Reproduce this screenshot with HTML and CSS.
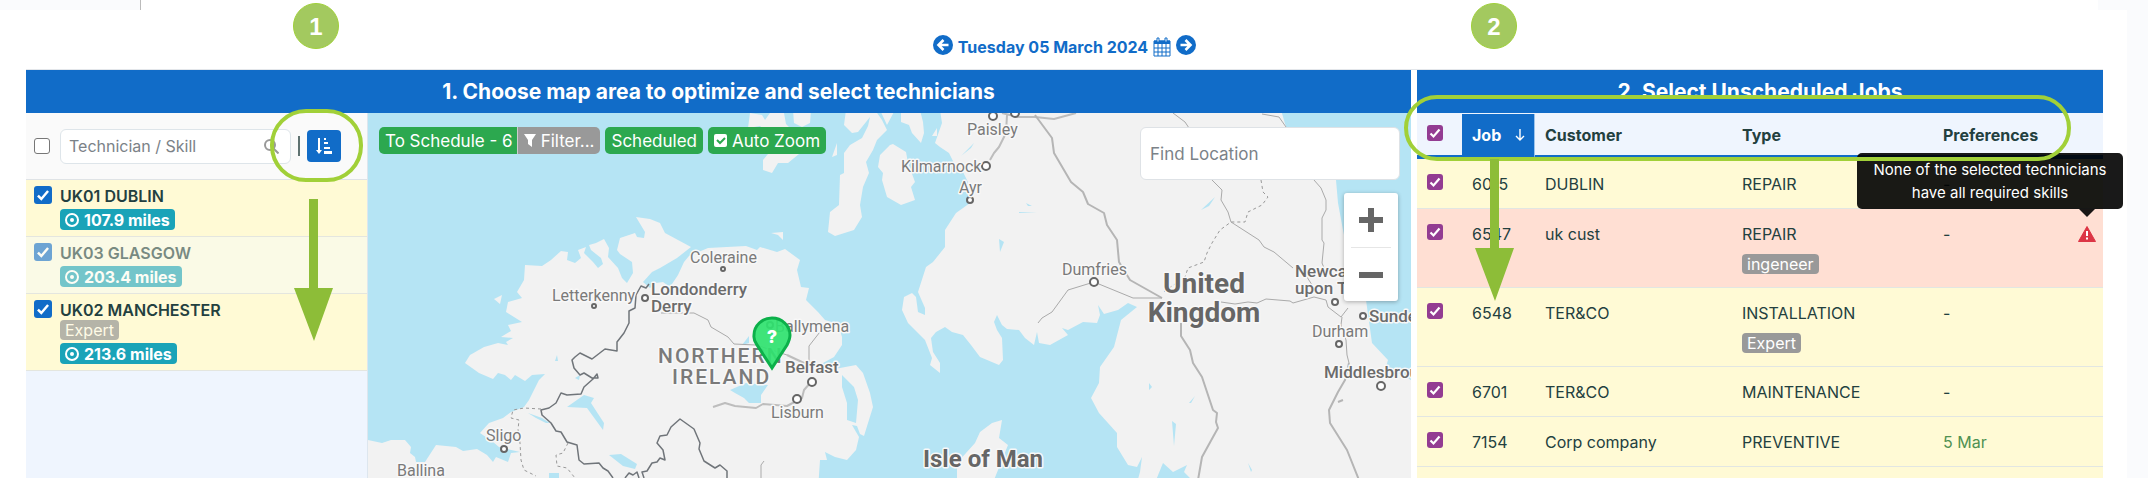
FILE: index.html
```
<!DOCTYPE html>
<html lang="en">
<head>
	<meta charset="utf-8">
	<title>Schedule optimizer</title>
	<link rel="stylesheet" href="styles.css">
</head>
<body>
	<div class="page">
		<div class="top-tab"></div>
		<div class="top-tab right"></div>
		<header class="date-bar">
			<button type="button" class="icon-btn" aria-label="Previous day">
				<svg width="20" height="20" viewBox="0 0 20 20"><circle cx="10" cy="10" r="10" fill="#116cc8"/><path d="M15.5 10H6M10.5 5L5.5 10l5 5" fill="none" stroke="#fff" stroke-width="2.6"/></svg>
			</button>
			<a href="#" class="date">Tuesday 05 March 2024</a>
			<button type="button" class="icon-btn cal" aria-label="Calendar">
				<svg width="18" height="20" viewBox="0 0 18 20"><path d="M1 4h16v15H1z" fill="#fff" stroke="#116cc8"/><path d="M1 3.5h16V7H1z" fill="#116cc8"/><path d="M5 7v12M9 7v12M13 7v12M1 11h16M1 15h16" stroke="#116cc8"/><path d="M4 1h2v4H4zM12 1h2v4h-2z" fill="#fff" stroke="#116cc8"/></svg>
			</button>
			<button type="button" class="icon-btn" aria-label="Next day">
				<svg width="20" height="20" viewBox="0 0 20 20"><circle cx="10" cy="10" r="10" fill="#116cc8"/><path d="M4.5 10H14M9.5 5l5 5-5 5" fill="none" stroke="#fff" stroke-width="2.6"/></svg>
			</button>
		</header>

		<main class="panels">
			<section class="panel">
				<h2>1. Choose map area to optimize and select technicians</h2>
				<div class="panel-body">
					<aside class="techs">
						<div class="tech-search">
							<input type="checkbox" class="box plain" aria-label="Select all technicians">
							<div class="search-field">
								<input type="text" placeholder="Technician / Skill" aria-label="Technician / Skill">
								<svg width="15" height="15" viewBox="0 0 15 15" fill="none" stroke="#999" stroke-width="2"><circle cx="6" cy="6" r="5"/><path d="M9.5 9.5l5 5"/></svg>
							</div>
							<span class="sep"></span>
							<button type="button" class="sort" aria-label="Sort">
								<svg width="16" height="18" viewBox="0 0 16 18" fill="#fff"><path d="M2 1h2v12h2l-3 4-3-4h2z"/><path d="M8 1h2v2H8zM8 5h4v2H8zM8 10h6v2H8zM8 14h8v3H8z"/></svg>
							</button>
						</div>
						<ul class="tech-list">
							<li>
								<input type="checkbox" class="box blue" id="t1" checked>
								<div>
									<label for="t1">UK01 DUBLIN</label>
									<span class="miles"><svg viewBox="0 0 14 14"><circle cx="7" cy="7" r="6"/><circle class="dot" cx="7" cy="7" r="2"/></svg>107.9 miles</span>
								</div>
							</li>
							<li class="dim">
								<input type="checkbox" class="box blue" id="t2" checked>
								<div>
									<label for="t2">UK03 GLASGOW</label>
									<span class="miles"><svg viewBox="0 0 14 14"><circle cx="7" cy="7" r="6"/><circle class="dot" cx="7" cy="7" r="2"/></svg>203.4 miles</span>
								</div>
							</li>
							<li>
								<input type="checkbox" class="box blue" id="t3" checked>
								<div>
									<label for="t3">UK02 MANCHESTER</label>
									<span class="skill light">Expert</span>
									<span class="miles"><svg viewBox="0 0 14 14"><circle cx="7" cy="7" r="6"/><circle class="dot" cx="7" cy="7" r="2"/></svg>213.6 miles</span>
								</div>
							</li>
						</ul>
					</aside>

					<div class="map">
						<svg class="map-canvas" viewBox="368 113 1043 365" preserveAspectRatio="xMidYMid slice">
							<!-- land -->
							<g fill="#f2f2f2">
								<path d="M360 440L368 440 382 443 391 440 405 440 411 447 410 453 415 457 416 462 425 462 436 445 456 447 463 451 477 449 487 455 493 462 496 457 508 462 511 453 520 452 499 447 493 442 480 433 489 423 503 418 511 412 524 407 529 400 539 380 545 374 532 375 525 381 515 375 511 380 505 375 498 373 493 379 479 373 465 363 470 355 484 347 498 343 508 345 506 342 513 338 501 337 511 331 508 325 522 322 506 312 508 302 522 298 517 292 524 280 525 265 542 266 551 260 561 251 568 252 567 260 575 263 581 258 578 250 586 247 584 253 593 262 598 268 603 264 601 258 591 250 589 245 596 243 604 239 609 248 608 257 618 268 622 278 627 283 633 273 632 262 620 254 617 250 620 238 635 233 637 237 644 238 645 232 636 217 650 219 660 223 665 233 678 240 691 247 677 258 660 268 652 272 643 282 650 288 656 283 663 282 670 287 678 275 684 262 689 256 708 248 746 246 757 250 760 247 777 252 785 249 800 260 797 270 801 287 809 288 806 300 818 312 825 320 838 324 842 337 842 345 834 357 823 363 820 373 840 368 856 365 863 373 870 393 873 407 868 423 864 436 860 434 857 426 852 425 859 437 856 450 847 460 835 457 825 452 827 460 820 460 818 490 360 490z"/>
								<path d="M494 299L502 295 500 304zM771 233L783 232 783 240 778 235z"/>
								<path d="M748 128L750 113 762 115 765 120 770 113 784 113 786 124 792 130 795 150 799 154 788 163 778 163 772 173 763 170 763 160 768 154 770 135 760 126zM793 110h18l-1 13-8 4-8-4zM832 157l5-14v12z"/>
								<path d="M844 125L846 110 875 110 882 120 887 130 877 140 873 150 866 162 869 173 863 187 860 205 862 217 854 230 835 236 828 232 830 212 839 205 840 175 844 173 844 153 850 145 862 138 868 126 870 117 858 132 852 133z"/>
								<path d="M880 155L890 145 893 144 906 152 908 163 915 182 911 187 915 200 901 205 887 197 882 180 883 173 878 167zM880 110h15l-8 15zM901 110h19l3 12 1 11-3 10-9-10-3-8-8-3zM937 128l-5 8 5 0z"/>
								<path d="M940 110L942 123 935 143 940 147 949 153 954 163 962 170 968 182 968 197 970 203 956 213 945 230 945 247 933 262 926 267 918 292 925 308 925 315 918 312 916 297 912 293 904 297 902 310 908 323 925 340 932 358 930 365 940 373 940 363 933 352 931 338 936 332 945 327 952 332 963 335 971 345 980 357 999 365 1003 360 1002 338 997 330 994 322 997 315 1002 325 1007 329 1019 330 1025 338 1034 345 1037 332 1039 343 1050 345 1068 335 1062 328 1068 330 1083 322 1097 323 1100 315 1098 305 1104 314 1118 310 1128 303 1137 307 1121 320 1114 347 1100 367 1099 383 1091 398 1099 413 1117 433 1117 447 1128 465 1137 467 1142 457 1140 472 1135 490 1152 490 1163 463 1173 472 1187 465 1184 472 1192 480 1411 490 1411 380 1386 367 1388 360 1372 343 1366 300 1345 240 1343 230 1338 203 1336 180 1325 165 1295 140 1286 127 1281 110z"/>
								<path d="M1002 420L999 438 1008 445 990 490 957 490 957 463 975 443 980 432 992 423z"/>
							</g>
							<!-- lakes -->
							<g fill="#b5e4f4">
								<path d="M730 390L746 383 768 385 761 395 761 403 749 403 744 398 735 393zM567 407L584 395 594 398 591 403 604 423 603 430 587 408zM842 375L854 387 858 400 856 423 847 420 847 403 842 387zM528 413l14 5 8 5-4 0-10-5zM609 455l12-1 16 10-2 5-12-3zM742 345l7-9 0 7zM555 361l2-6 1 6zM575 378l5-3-1 5zM549 473h10v5h-10zM961 156l13-13-3 5zM1019 212l18 1-18 0zM1026 203l6 3-4 0zM999 239l5 3-4 10zM1172 421l4 3-2 22zM1189 403l6-7-4 7zM1144 381l1 14zM1149 383l3 4-3 3zM1201 210l14-13-6 9zM1032 287l8 9zM1248 463l4 7-1 2zM1294 468l14-11z"/>
							</g>
							<!-- roads -->
							<g fill="none" stroke="#bdbdbd" stroke-width="2" stroke-linejoin="round">
								<path d="M1002 113L1018 117 1035 117 1054 119 1076 113M1007 115L1006 133 999 147 994 153 990 160" />
								<path d="M1035 115L1052 138 1054 153 1071 182 1083 192 1088 204 1104 213 1107 225 1117 240 1119 262 1130 280 1162 298M1181 323L1181 336 1190 350 1193 363 1202 377 1213 410 1217 413 1216 422 1218 428 1213 437 1202 457 1198 480M1349 363L1345 380 1338 392 1329 410 1330 423 1347 450 1359 480M1338 402l5-2" stroke="#b5b5b5"/>
								<path d="M713 407L725 403 735 406 756 408 763 404 787 406 802 398 804 390 811 382M787 355L804 363"/>
								<path stroke-width="1" stroke="#aaa" d="M661 313L694 313 708 320 711 327 728 337 734 344 756 345 787 355M804 363L809 362 809 346 823 328M761 480V465l3-4M1038 323L1042 318 1052 312 1068 290 1094 282 1133 298 1162 298M1221 302L1235 304 1248 302 1257 303 1266 299 1290 301 1293 303 1314 297 1326 300 1328 307 1341 317 1348 308M1342 317L1341 325 1346 340 1347 355 1349 363M1173 113L1185 122 1189 128M1212 180L1222 190 1221 200 1228 212 1231 222 1259 240 1264 247 1274 252 1293 268M1314 180L1321 188 1326 200 1326 210 1322 218 1322 240 1324 243 1322 263 1327 275M1262 114L1279 117 1286 127M1305 274l9 14"/>
							</g>
							<!-- borders -->
							<g fill="none" stroke="#70757a" stroke-linejoin="round">
								<path d="M649 284L646 288 641 286 636 295 635 308 629 311 629 323 624 333 617 342 617 351 605 349 592 359 580 353 575 357 572 360 574 368 580 375 584 373 592 378 598 378 597 374 593 379 584 387 581 394 567 395 561 393 556 403 549 408 541 410 542 415 551 423 556 431 561 432 567 442 577 445 579 460 584 464 599 463 603 468 608 471 613 478M625 478l4-5 4 2 4-3 2 6M644 478l-2-6 5-1 5-8 5-1 3-4 5 2-2-10-6-7 3-7 7-1 4-8 9-8 14 10 6 14-1 6 5 12 11 7 5-3 7 6v8" stroke-width="1.5"/>
								<path stroke="#999" stroke-dasharray="3 3" d="M541 409L524 408 513 410 511 418 519 420 518 430 520 443 521 460 524 470 536 476M568 443L563 453 556 455 557 466 567 468 575 478M1261 180L1263 192 1268 197 1262 205 1248 212 1245 222 1231 222 1220 230 1212 243 1207 253 1204 262 1188 268 1185 277 1162 293"/>
							</g>
							<!-- towns -->
							<g class="town">
								<circle cx="723" cy="269" r="2"/><circle cx="594" cy="306" r="2"/><circle cx="645" cy="298" r="3"/><circle cx="770" cy="325" r="3"/><circle cx="812" cy="382" r="4"/><circle cx="797" cy="399" r="4"/><circle cx="504" cy="449" r="3"/><circle cx="993" cy="116" r="4"/><circle cx="1015" cy="113" r="4"/><circle cx="986" cy="166" r="4"/><circle cx="970" cy="200" r="3"/><circle cx="1094" cy="282" r="4"/><circle cx="1335" cy="302" r="3"/><circle cx="1363" cy="316" r="3"/><circle cx="1339" cy="344" r="3"/><circle cx="1381" cy="386" r="4"/>
							</g>
							<g class="names">
								<text x="690" y="263">Coleraine</text>
								<text x="552" y="301">Letterkenny</text>
								<text x="775" y="332">Ballymena</text>
								<text x="771" y="418">Lisburn</text>
								<text x="486" y="441">Sligo</text>
								<text x="397" y="476">Ballina</text>
								<text x="967" y="135">Paisley</text>
								<text x="901" y="172">Kilmarnock</text>
								<text x="959" y="193">Ayr</text>
								<text x="1062" y="275">Dumfries</text>
								<text x="1312" y="337">Durham</text>
								<g class="city">
									<text x="651" y="295">Londonderry</text>
									<text x="651" y="312">Derry</text>
									<text x="785" y="373">Belfast</text>
									<text x="1295" y="277">Newcastle</text>
									<text x="1295" y="294">upon Tyne</text>
									<text x="1369" y="322">Sunderland</text>
									<text x="1324" y="378">Middlesbrough</text>
								</g>
								<g class="region">
									<text x="658" y="363">NORTHERN</text>
									<text x="672" y="384">IRELAND</text>
								</g>
								<g class="country">
									<text x="1204" y="293">United</text>
									<text x="1204" y="322">Kingdom</text>
								</g>
								<text class="isle" x="923" y="467">Isle of Man</text>
							</g>
							<path d="M772 368L757 345C753 340 754 337 754 335a18 17 0 0 1 36 0c0 3-1 6-3 10z" fill="#2fe36f" fill-opacity=".92" stroke="#0cb04a" stroke-width="3"/>
							<text class="pin-mark" x="772" y="343">?</text>
						</svg>

						<div class="map-tools">
							<div class="group">
								<button type="button">To Schedule - 6</button><button type="button" class="grey"><svg width="12" height="13" viewBox="0 0 12 13"><path d="M0 0h12L8 6v7L4 10V6z" fill="#fff"/></svg>Filter...</button>
							</div>
							<button type="button">Scheduled</button>
							<button type="button"><svg width="13" height="13" viewBox="0 0 13 13"><rect width="13" height="13" rx="2" fill="#fff"/><path d="M3 6l3 3 5-5" fill="none" stroke="#2ca84f" stroke-width="2"/></svg>Auto Zoom</button>
						</div>
						<input type="text" class="find" placeholder="Find Location" aria-label="Find Location">
						<div class="zoom">
							<button type="button" aria-label="Zoom in"><svg width="24" height="24" viewBox="0 0 24 24"><path d="M12 0v24M0 12h24" stroke="#666" stroke-width="6"/></svg></button>
							<button type="button" aria-label="Zoom out"><svg width="24" height="24" viewBox="0 0 24 24"><path d="M0 12h24" stroke="#666" stroke-width="6"/></svg></button>
						</div>
					</div>
				</div>
				<div class="note-circle one">1</div>
				<div class="note-ring one"></div>
				<svg class="note-arrow one" width="39" height="142" viewBox="0 0 39 142"><path d="M15 0h9v89h15l-19 53L0 89h15z" fill="#8dbd38"/></svg>
			</section>

			<section class="panel">
				<h2>2. Select Unscheduled Jobs</h2>
				<table class="jobs">
					<colgroup><col class="c-check"><col class="c-job"><col class="c-cust"><col class="c-type"><col class="c-pref"><col class="c-warn"></colgroup>
					<thead>
						<tr>
							<th><input type="checkbox" class="box purple" aria-label="Select all jobs" checked></th>
							<th class="sorted"><span>Job</span><svg width="10" height="12" viewBox="0 0 10 12" fill="none" stroke="#fff"><path d="M5 0v11M1 7l4 4 4-4" stroke-width="1.4"/></svg></th>
							<th>Customer</th>
							<th>Type</th>
							<th>Preferences</th>
							<th></th>
						</tr>
					</thead>
					<tbody>
						<tr>
							<td><input type="checkbox" class="box purple" aria-label="6015" checked></td>
							<td>6015</td><td>DUBLIN</td><td>REPAIR</td><td>-</td><td></td>
						</tr>
						<tr class="bad">
							<td><input type="checkbox" class="box purple" aria-label="6547" checked></td>
							<td>6547</td><td>uk cust</td><td>REPAIR<span class="skill">ingeneer</span></td><td>-</td>
							<td class="warn">
								<svg width="18" height="16" viewBox="0 0 18 16"><path d="M9 0.5L17.5 15.5H.5z" fill="#dc3545" stroke="#dc3545" stroke-linejoin="round"/><path d="M8 5h2v5H8zM8 11.500h2v2H8z" fill="#fff"/></svg>
								<div class="tooltip" role="tooltip">None of the selected technicians have all required skills</div>
							</td>
						</tr>
						<tr>
							<td><input type="checkbox" class="box purple" aria-label="6548" checked></td>
							<td>6548</td><td>TER&amp;CO</td><td>INSTALLATION<span class="skill">Expert</span></td><td>-</td><td></td>
						</tr>
						<tr>
							<td><input type="checkbox" class="box purple" aria-label="6701" checked></td>
							<td>6701</td><td>TER&amp;CO</td><td>MAINTENANCE</td><td>-</td><td></td>
						</tr>
						<tr>
							<td><input type="checkbox" class="box purple" aria-label="7154" checked></td>
							<td>7154</td><td>Corp company</td><td>PREVENTIVE</td><td class="day">5 Mar</td><td></td>
						</tr>
					</tbody>
				</table>
				<div class="jobs-rest"></div>
				<div class="note-circle two">2</div>
				<div class="note-ring two"></div>
				<svg class="note-arrow two" width="39" height="142" viewBox="0 0 39 142"><path d="M15 0h9v89h15l-19 53L0 89h15z" fill="#8dbd38"/></svg>
			</section>
		</main>
	</div>
	<div class="gutter"></div>
</body>
</html>
```
FILE: styles.css
```
*{
	box-sizing: border-box;
	margin: 0;
	padding: 0;
}
body{
	display: flex;
	height: 100vh;
	overflow: hidden;
	background: #fff;
	color: #23403f;
	font: 16px/24px Inter, "Liberation Sans", sans-serif;
}
button, input{
	font: inherit;
	color: inherit;
}
button{
	border: 0;
	cursor: pointer;
}
.page{
	flex: 1;
	min-width: 0;
	display: flex;
	flex-direction: column;
	position: relative;
	padding: 0 24px 0 26px;
}
.gutter{
	width: 21px;
	background: #fafbfd;
}
.top-tab{
	position: absolute;
	left: 0;
	top: 0;
	width: 141px;
	height: 10px;
	background: #fafbfd;
	border-right: 1px solid #bbb;
}
.top-tab.right{
	left: auto;
	right: 0;
	width: 29px;
	border: 0;
}

/* date */
.date-bar{
	display: flex;
	justify-content: center;
	gap: 5px;
	height: 70px;
	padding-top: 35px;
	border-bottom: 1px solid #e3e6ea;
}
.date{
	color: #116cc8;
	font-weight: 700;
	text-decoration: none;
}
.icon-btn{
	height: 20px;
	background: none;
}
.icon-btn svg{
	display: block;
}
.icon-btn.cal{
	margin-top: 2px;
}

/* panels */
.panels{
	flex: 1;
	min-height: 0;
	display: grid;
	grid-template-columns: 1385fr 686fr;
	grid-template-rows: minmax(0, 1fr);
	gap: 6px;
}
.panel{
	position: relative;
	min-width: 0;
	display: flex;
	flex-direction: column;
	background: #eff5fe;
}
h2{
	flex: none;
	height: 43px;
	background: #116cc8;
	color: #fff;
	font-size: 21px;
	line-height: 43px;
	text-align: center;
}
.panel-body{
	flex: 1;
	min-height: 0;
	display: flex;
}

/* check boxes */
.box{
	appearance: none;
	flex: none;
	display: block;
	width: 16px;
	height: 16px;
	border-radius: 3px;
	background: center / 100% url("data:image/svg+xml,%3Csvg xmlns='http://www.w3.org/2000/svg' viewBox='0 0 16 16'%3E%3Cpath d='M3.500 8.500l3 3 6-7' fill='none' stroke='%23fff' stroke-width='2.200'/%3E%3C/svg%3E") no-repeat;
}
.box.plain{
	background: #fff;
	border: 1px solid #777;
}
.box.blue{
	width: 18px;
	height: 18px;
	background-color: #116cc8;
}
.box.purple{
	background-color: #933c92;
}

/* technicians */
.techs{
	width: 342px;
	border-right: 1px solid #dde6ee;
}
.tech-search{
	display: flex;
	align-items: center;
	height: 67px;
	padding: 0 26px 0 8px;
	background: #fafafa;
	border-bottom: 1px solid #dfe3e6;
}
.search-field{
	position: relative;
	flex: 1;
	margin: 0 7px 0 10px;
}
.search-field input{
	width: 100%;
	height: 35px;
	padding: 0 8px;
	border: 1px solid #dee5ea;
	border-radius: 6px;
	background: #fff;
}
.search-field svg{
	position: absolute;
	right: 12px;
	top: 10px;
}
::placeholder{
	color: #7b8288;
	opacity: 1;
}
.sep{
	width: 2px;
	height: 20px;
	margin-right: 7px;
	background: #5f7271;
}
.sort{
	display: flex;
	align-items: center;
	justify-content: center;
	width: 34px;
	height: 32px;
	border-radius: 4px;
	background: #116cc8;
}
.tech-list{
	list-style: none;
}
.tech-list li{
	display: flex;
	gap: 8px;
	padding: 6px 8px;
	background: #fffad5;
	border-bottom: 1px solid #e4e6df;
}
.tech-list li.dim{
	background: #fafae6;
}
.dim .box, .dim label, .dim .miles{
	opacity: .6;
}
.tech-list label{
	display: block;
	line-height: 20px;
	font-weight: 600;
}
.miles{
	display: flex;
	align-items: center;
	gap: 5px;
	width: max-content;
	height: 21px;
	margin-top: 3px;
	padding: 0 5px;
	border-radius: 4px;
	background: #1aa3b8;
	color: #fff;
	font-weight: 700;
}
.miles svg{
	width: 14px;
	height: 14px;
	fill: none;
	stroke: #fff;
	stroke-width: 2;
}
.miles .dot{
	fill: #fff;
	stroke: none;
}
.skill{
	display: block;
	width: max-content;
	height: 20px;
	padding: 0 5px;
	border-radius: 4px;
	background: #999;
	color: #fff;
	line-height: 20px;
}
.skill.light{
	background: #b5b4a8;
	color: #fffbe6;
}

/* map */
.map{
	position: relative;
	flex: 1;
	min-width: 0;
	overflow: hidden;
	background: #b5e4f4;
}
.map-canvas{
	position: absolute;
	width: 100%;
	height: 100%;
}
.town circle{
	fill: #fff;
	stroke: #666;
	stroke-width: 2;
}
.names{
	font-family: Roboto, sans-serif;
	font-size: 16px;
	fill: #7a7a7a;
	stroke: #f8f8f8;
	stroke-width: 3;
	stroke-linejoin: round;
	paint-order: stroke;
}
.city{
	font-weight: 500;
	font-size: 17px;
	fill: #6b6b6b;
}
.region{
	font-weight: 500;
	font-size: 21px;
	letter-spacing: 2px;
}
.country{
	font-weight: 700;
	font-size: 28px;
	fill: #666;
	text-anchor: middle;
}
.isle{
	font-weight: 700;
	font-size: 24px;
	fill: #666;
}
.pin-mark{
	fill: #fff;
	font-weight: 800;
	font-size: 18px;
	text-anchor: middle;
}
.map-tools{
	position: absolute;
	left: 11px;
	top: 14px;
	display: flex;
	gap: 5px;
}
.map-tools button{
	height: 27px;
	padding: 0 6px;
	border-radius: 5px;
	background: #2ca84f;
	color: #fff;
	font-size: 17px;
}
.map-tools svg{
	margin-right: 5px;
}
.group{
	display: flex;
}
.group button:first-child{
	padding-right: 4px;
	border-radius: 5px 0 0 5px;
}
.map-tools .grey{
	background: #999;
	border-left: 1px solid #ccc;
	border-radius: 0 5px 5px 0;
}
.find{
	position: absolute;
	right: 11px;
	top: 14px;
	width: 260px;
	height: 53px;
	padding: 0 9px;
	border: 1px solid #dee2e6;
	border-radius: 6px;
	background: #fff;
	font-size: 17px;
}
.zoom{
	position: absolute;
	right: 13px;
	top: 80px;
	width: 54px;
	padding: 0 7px;
	border-radius: 3px;
	background: #fff;
	box-shadow: 0 1px 4px rgba(0,0,0,.3);
}
.zoom button{
	display: flex;
	align-items: center;
	justify-content: center;
	width: 40px;
	height: 54px;
	background: none;
}
.zoom button + button{
	border-top: 1px solid #e6e6e6;
}

/* jobs */
.jobs{
	flex: none;
	width: 100%;
	margin-top: 1px;
	table-layout: fixed;
	border-collapse: separate;
	border-spacing: 0;
	text-align: left;
}
.jobs-rest{
	flex: 1;
	background: #fffad5;
}
.c-check{
	width: 45px;
}
.c-job{
	width: 73px;
}
.c-cust{
	width: 197px;
}
.c-type{
	width: 201px;
}
.c-warn{
	width: 32px;
}
.jobs th{
	height: 45px;
	padding: 0 10px;
	border-bottom: 4px solid #116cc8;
	font-weight: 700;
	white-space: nowrap;
}
.jobs th .box{
	margin-top: -3px;
}
.jobs th.sorted{
	padding-right: 5px;
	background: #116cc8;
	border-right: 1px solid #9cc4ec;
	color: #fff;
}
.sorted span{
	margin-right: 14px;
}
.jobs td{
	height: 50px;
	padding: 13px 10px 12px;
	vertical-align: top;
	background: #fffad5;
	border-bottom: 1px solid #e2e6e2;
}
.jobs td .box{
	margin-top: 2px;
}
.jobs .skill{
	margin: 8px 0 1px;
}
.jobs .bad td{
	background: #ffdfd3;
}
.jobs .day{
	color: #4f9152;
}
.jobs td.warn{
	position: relative;
	padding: 17px 7px 0;
}
.warn svg{
	display: block;
}
.tooltip{
	position: absolute;
	right: -20px;
	bottom: 78px;
	width: 266px;
	padding: 5px 10px;
	border-radius: 5px;
	background: rgba(0,0,0,.9);
	color: #fff;
	font-size: 15px;
	line-height: 23px;
	text-align: center;
}
.tooltip::after{
	content: "";
	position: absolute;
	right: 28px;
	top: 100%;
	border: 8px solid transparent;
	border-top-color: rgba(0,0,0,.9);
	border-bottom: 0;
}

/* walkthrough marks over the panels */
.note-circle, .note-ring, .note-arrow{
	position: absolute;
}
.note-circle{
	top: -67px;
	width: 46px;
	height: 46px;
	border: 1px solid #9fd037;
	border-radius: 50%;
	background: #a3c95f;
	color: #fff;
	font: 700 24px/46px "Liberation Sans", sans-serif;
	text-align: center;
}
.note-ring{
	border: 4px solid #a1d038;
	border-radius: 36px;
}
.note-circle.one{
	left: 267px;
}
.note-ring.one{
	left: 244px;
	top: 39px;
	width: 93px;
	height: 73px;
}
.note-arrow.one{
	left: 268px;
	top: 129px;
}
.note-circle.two{
	left: 54px;
}
.note-ring.two{
	left: -13px;
	right: 32px;
	top: 25px;
	height: 66px;
}
.note-arrow.two{
	left: 58px;
	top: 89px;
}
```
